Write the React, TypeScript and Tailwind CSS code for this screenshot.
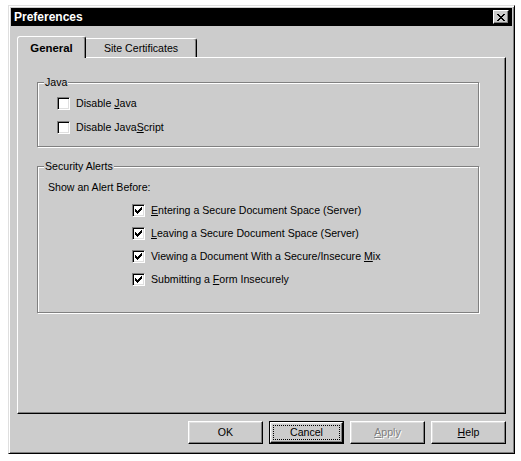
import { ReactNode } from "react";
import clsx from "clsx";

function CheckBox({ checked }: { checked?: boolean }) {
  return (
    <span className="flex h-[13px] w-[13px] shrink-0 items-center justify-center border border-t-[#808080] border-l-[#808080] border-r-white border-b-white bg-white shadow-[inset_1px_1px_0_#000,inset_-1px_-1px_0_#dfdfdf]">
      {checked && (
        <svg width="7" height="7" viewBox="0 0 7 7" shapeRendering="crispEdges">
          <path d="M6 0h1v3h-1v1h-1v1h-1v1h-1v1h-1v-1h-1v-1h-1v-3h1v1h1v1h1v-1h1v-1h1v-1h1z" fill="#000" />
        </svg>
      )}
    </span>
  );
}

function Option({
  checked,
  tall,
  children,
}: {
  checked?: boolean;
  tall?: boolean;
  children: ReactNode;
}) {
  return (
    <div className={clsx("flex items-center gap-[6px]", tall ? "h-[24px]" : "h-[23px]")}>
      <CheckBox checked={checked} />
      <span>{children}</span>
    </div>
  );
}

function Button({
  children,
  isDefault,
  disabled,
}: {
  children: ReactNode;
  isDefault?: boolean;
  disabled?: boolean;
}) {
  return (
    <div
      className={clsx(
        "flex h-[23px] w-[75px]",
        isDefault ? "border border-black" : ""
      )}
    >
      <div className="flex flex-1 border border-t-white border-l-white border-r-black border-b-black shadow-[inset_-1px_-1px_0_#808080,inset_1px_1px_0_#dfdfdf]">
        <div
          className={clsx(
            "m-[2px] flex flex-1 items-center justify-center",
            isDefault ? "outline outline-1 outline-dotted outline-black -outline-offset-1" : "",
            disabled ? "text-[#808080] [text-shadow:1px_1px_0_#fff]" : ""
          )}
        >
          {children}
        </div>
      </div>
    </div>
  );
}

function Group({ title, children }: { title: string; children: ReactNode }) {
  return (
    <fieldset className="ml-[19px] w-[442px] border border-[#808080] p-0 shadow-[1px_1px_0_#fff,inset_1px_1px_0_#fff]">
      <legend className="ml-[6px] bg-[#cccccc] px-px">{title}</legend>
      {children}
    </fieldset>
  );
}

export default function App() {
  return (
    <div className="h-[461px] w-[521px] bg-white pl-[8px] pt-[5px] font-['Liberation_Sans',Arial,sans-serif] text-[10.6px] leading-[13px] text-black">
      <div className="flex h-[449px] w-[507px] flex-col border border-t-[#dfdfdf] border-l-[#dfdfdf] border-r-black border-b-black bg-[#cccccc] p-[2px] shadow-[inset_1px_1px_0_#fff,inset_-1px_-1px_0_#808080]">
        <div className="flex h-[18px] items-center justify-between bg-black pl-[3px] pr-[3px]">
          <span className="text-[12px] font-bold text-white">Preferences</span>
          <div className="flex h-[14px] w-[16px] items-center justify-center border border-t-white border-l-white border-r-black border-b-black bg-[#cccccc] shadow-[inset_-1px_-1px_0_#808080]">
            <svg width="8" height="7" viewBox="0 0 8 7" shapeRendering="crispEdges">
              <path
                d="M0 0h2v1h1v1h2v-1h1v-1h2v1h-1v1h-1v1h-1v1h1v1h1v1h1v1h-2v-1h-1v-1h-2v1h-1v1h-2v-1h1v-1h1v-1h1v-1h-1v-1h-1v-1h-1z"
                fill="#000"
              />
            </svg>
          </div>
        </div>

        <div className="flex flex-1 flex-col px-[6px] pt-[10px]">
          <div className="flex h-[21px] items-start">
            <div className="relative z-10 flex h-[22px] w-[69px] items-center justify-center rounded-t-[3px] border-l border-t border-r border-l-white border-t-white border-r-black bg-[#cccccc] pt-[1px] text-[11.4px] font-bold shadow-[inset_-1px_0_0_#808080]">
              General
            </div>
            <div className="mt-[2px] flex h-[19px] w-[111px] items-center justify-center rounded-tr-[3px] border-t border-r border-t-white border-r-black shadow-[inset_-1px_0_0_#808080]">
              Site Certificates
            </div>
          </div>

          <div className="h-[357px] border border-t-white border-l-white border-r-black border-b-black pt-[18px] shadow-[inset_-1px_-1px_0_#808080]">
            <Group title="Java">
              <div className="pb-[7px] pl-[19px] pt-[2px]">
                <Option tall>
                  Disable <u className="underline">J</u>ava
                </Option>
                <Option tall>
                  Disable Java<u className="underline">S</u>cript
                </Option>
              </div>
            </Group>

            <div className="h-[13px]" />

            <Group title="Security Alerts">
              <div className="pb-[21px] pl-[10px] pt-[3px]">
                <div className="flex h-[23px] items-center">Show an Alert Before:</div>
                <div className="ml-[84px]">
                  <Option checked>
                    <u className="underline">E</u>ntering a Secure Document Space (Server)
                  </Option>
                  <Option checked>
                    <u className="underline">L</u>eaving a Secure Document Space (Server)
                  </Option>
                  <Option checked>
                    Viewing a Document With a Secure/Insecure <u className="underline">M</u>ix
                  </Option>
                  <Option checked>
                    Submitting a <u className="underline">F</u>orm Insecurely
                  </Option>
                </div>
              </div>
            </Group>
          </div>

          <div className="mt-[7px] flex justify-end gap-[6px]">
            <Button>OK</Button>
            <Button isDefault>Cancel</Button>
            <Button disabled>
              <u className="underline">A</u>pply
            </Button>
            <Button>
              <u className="underline">H</u>elp
            </Button>
          </div>
        </div>
      </div>
    </div>
  );
}
